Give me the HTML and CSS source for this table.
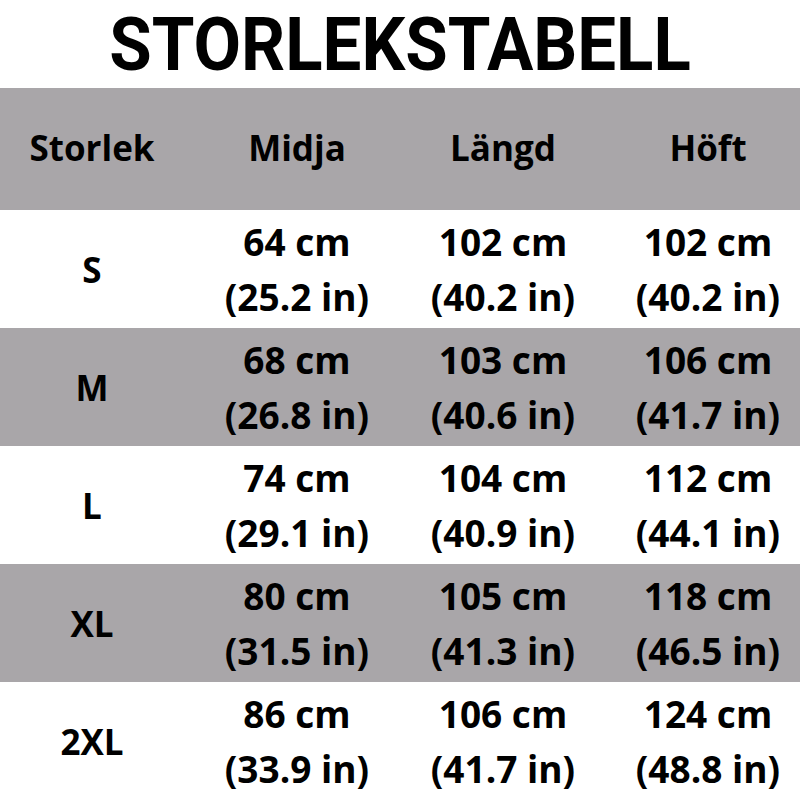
FILE: index.html
```html
<!DOCTYPE html>
<html lang="sv">
<head>
<meta charset="utf-8">
<title>Storlekstabell</title>
<link rel="stylesheet" href="styles.css">
</head>
<body>
<div class="page">
  <h1 class="title">STORLEKSTABELL</h1>
  <div class="table">
    <div class="row head">
      <div class="cell first">Storlek</div>
      <div class="cell">Midja</div>
      <div class="cell">Längd</div>
      <div class="cell">Höft</div>
    </div>
    <div class="row">
      <div class="cell first">S</div>
      <div class="cell"><span>64 cm</span><span>(25.2 in)</span></div>
      <div class="cell"><span>102 cm</span><span>(40.2 in)</span></div>
      <div class="cell"><span>102 cm</span><span>(40.2 in)</span></div>
    </div>
    <div class="row alt">
      <div class="cell first">M</div>
      <div class="cell"><span>68 cm</span><span>(26.8 in)</span></div>
      <div class="cell"><span>103 cm</span><span>(40.6 in)</span></div>
      <div class="cell"><span>106 cm</span><span>(41.7 in)</span></div>
    </div>
    <div class="row">
      <div class="cell first">L</div>
      <div class="cell"><span>74 cm</span><span>(29.1 in)</span></div>
      <div class="cell"><span>104 cm</span><span>(40.9 in)</span></div>
      <div class="cell"><span>112 cm</span><span>(44.1 in)</span></div>
    </div>
    <div class="row alt">
      <div class="cell first">XL</div>
      <div class="cell"><span>80 cm</span><span>(31.5 in)</span></div>
      <div class="cell"><span>105 cm</span><span>(41.3 in)</span></div>
      <div class="cell"><span>118 cm</span><span>(46.5 in)</span></div>
    </div>
    <div class="row">
      <div class="cell first">2XL</div>
      <div class="cell"><span>86 cm</span><span>(33.9 in)</span></div>
      <div class="cell"><span>106 cm</span><span>(41.7 in)</span></div>
      <div class="cell"><span>124 cm</span><span>(48.8 in)</span></div>
    </div>
  </div>
</div>
</body>
</html>
```

FILE: styles.css
```css
html, body {
  margin: 0;
  padding: 0;
  background: #ffffff;
}
.page {
  width: 800px;
  height: 800px;
  overflow: hidden;
  font-family: "Open Sans", "Liberation Sans", sans-serif;
  color: #000;
}
.title {
  margin: 0;
  height: 88px;
  display: flex;
  align-items: center;
  justify-content: center;
  font-family: Roboto, "Liberation Sans", sans-serif;
  font-weight: 700;
  font-size: 75px;
  line-height: 1;
  letter-spacing: 0;
  transform: scaleX(0.92);
}
.table {
  display: flex;
  flex-direction: column;
}
.row {
  display: grid;
  grid-template-columns: 184px 206px 206px 204px;
  height: 118px;
  background: #ffffff;
}
.row.head {
  height: 122px;
  background: #a9a6a9;
}
.row.alt {
  background: #a9a6a9;
}
.cell {
  display: flex;
  flex-direction: column;
  align-items: center;
  justify-content: center;
  padding-left: 20px;
  font-weight: 700;
  font-size: 37px;
  line-height: 55px;
  white-space: nowrap;
}
.cell.first {
  padding-left: 0;
  font-size: 35px;
}
.head .cell {
  font-size: 35px;
  padding-bottom: 4px;
}
```
